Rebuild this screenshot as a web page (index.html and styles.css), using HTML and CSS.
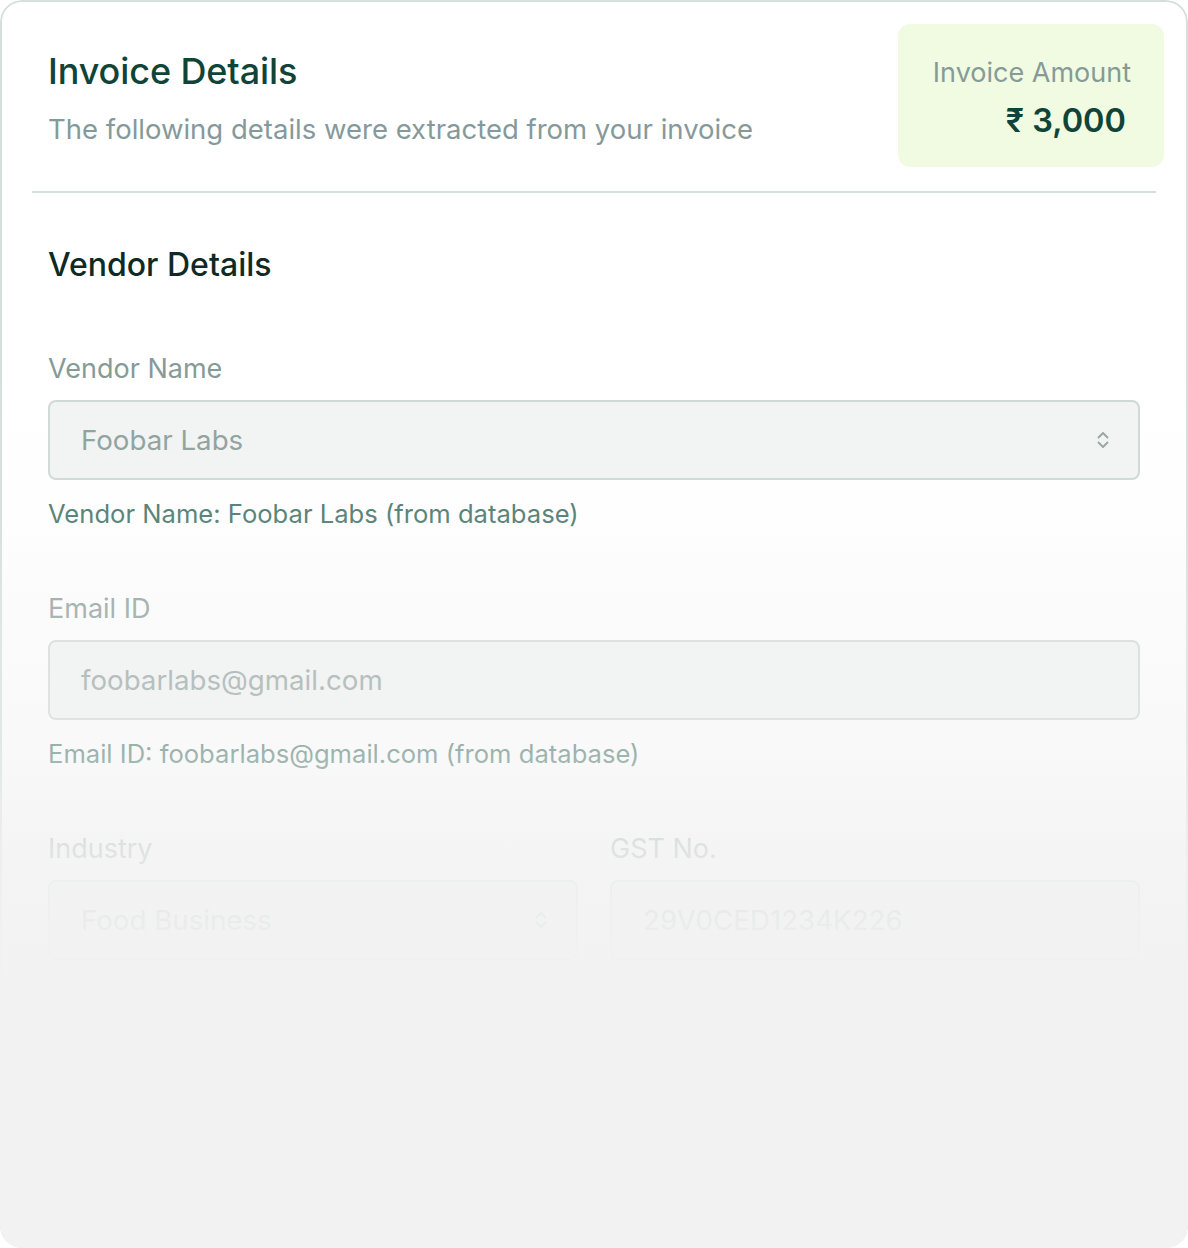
FILE: index.html
```html
<!DOCTYPE html>
<html>
<head>
<meta charset="utf-8">
<link rel="stylesheet" href="styles.css">
</head>
<body>
<div class="frame">
  <div class="card">
    <header class="head">
      <div class="head-text">
        <h1 class="title">Invoice Details</h1>
        <p class="subtitle">The following details were extracted from your invoice</p>
      </div>
      <div class="amount">
        <div class="amount-label">Invoice Amount</div>
        <div class="amount-value">₹ 3,000</div>
      </div>
    </header>
    <hr class="divider">
    <section class="body">
      <h2 class="section-title">Vendor Details</h2>
      <div class="field">
        <label class="label">Vendor Name</label>
        <div class="control">
          <span class="value">Foobar Labs</span>
          <svg class="chev" width="14" height="20" viewBox="0 0 14 20" fill="none" stroke="currentColor" stroke-width="1.8" stroke-linecap="round" stroke-linejoin="round"><path d="M2.5 7.5 7 3l4.5 4.5M2.5 12.5 7 17l4.5-4.5"/></svg>
        </div>
        <p class="help">Vendor Name: Foobar Labs (from database)</p>
      </div>
      <div class="field">
        <label class="label">Email ID</label>
        <div class="control">
          <span class="value">foobarlabs@gmail.com</span>
        </div>
        <p class="help">Email ID: foobarlabs@gmail.com (from database)</p>
      </div>
      <div class="row">
        <div class="field">
          <label class="label">Industry</label>
          <div class="control">
            <span class="value">Food Business</span>
            <svg class="chev" width="14" height="20" viewBox="0 0 14 20" fill="none" stroke="currentColor" stroke-width="1.8" stroke-linecap="round" stroke-linejoin="round"><path d="M2.5 7.5 7 3l4.5 4.5M2.5 12.5 7 17l4.5-4.5"/></svg>
          </div>
        </div>
        <div class="field">
          <label class="label">GST No.</label>
          <div class="control">
            <span class="value">29V0CED1234K226</span>
          </div>
        </div>
      </div>
    </section>
  </div>
  <div class="fade"></div>
</div>
</body>
</html>
```

FILE: styles.css
```css
* { box-sizing: border-box; }
html, body { margin: 0; padding: 0; background: #ffffff; }
body { font-family: Inter, "Noto Sans", sans-serif; }

.frame {
  position: relative;
  width: 1188px;
  height: 1248px;
  border-radius: 22px;
  overflow: hidden;
}
.card {
  height: 100%;
  background: #ffffff;
  border: 2px solid #d5dfdc;
  border-radius: 22px;
  padding: 22px 30px 0 30px;
}
.head {
  display: flex;
  justify-content: space-between;
  align-items: flex-start;
  padding-left: 16px;
}
.head-text { padding-top: 25px; }
.title {
  margin: 0;
  font-size: 36px;
  line-height: 44px;
  font-weight: 500;
  color: #104438;
  letter-spacing: -0.1px;
}
.subtitle {
  margin: 19px 0 0;
  font-size: 27.5px;
  line-height: 34px;
  color: #86999a;
}
.amount {
  width: 266px;
  height: 143px;
  margin-right: -8px;
  background: #f1fbe1;
  border-radius: 12px;
  padding: 32px 33px 0 0;
  text-align: right;
}
.amount-label {
  font-size: 27px;
  line-height: 34px;
  color: #869a97;
}
.amount-value {
  margin-top: 11px;
  padding-right: 5px;
  font-size: 32.5px;
  line-height: 40px;
  font-weight: 600;
  color: #104438;
}
.divider {
  border: 0;
  height: 2px;
  background: #d5dfdc;
  margin: 24px 0 0;
}
.body { padding: 0 16px 0 16px; }
.section-title {
  margin: 52px 0 0 0;
  font-size: 32px;
  line-height: 40px;
  font-weight: 500;
  color: #0f2a24;
}
.field { margin-top: 62px; }
.section-title + .field { margin-top: 67px; }
.label {
  display: block;
  font-size: 27px;
  line-height: 34px;
  color: #869a97;
}
.control {
  margin-top: 14px;
  height: 80px;
  border: 2px solid #cfd9d6;
  border-radius: 8px;
  background: #f2f4f3;
  display: flex;
  align-items: center;
  justify-content: space-between;
  padding: 0 28px 0 31px;
}
.value {
  font-size: 27.7px;
  color: #8fa19d;
}
.chev { color: #93a39f; }
.help {
  margin: 18px 0 0 0;
  font-size: 25.6px;
  line-height: 32px;
  color: #4e7a70;
}
.row {
  display: grid;
  grid-template-columns: 1fr 1fr;
  gap: 32px;
  margin-top: 62px;
}
.row .field { margin-top: 0; }
.fade {
  position: absolute;
  inset: 0;
  pointer-events: none;
  background: linear-gradient(to bottom,
    rgba(242,242,242,0) 0px,
    rgba(242,242,242,0) 380px,
    rgba(242,242,242,0.08) 513px,
    rgba(242,242,242,0.3) 608px,
    rgba(242,242,242,0.47) 752px,
    rgba(242,242,242,0.82) 848px,
    rgba(242,242,242,0.93) 930px,
    rgba(242,242,242,1) 985px);
}
```
